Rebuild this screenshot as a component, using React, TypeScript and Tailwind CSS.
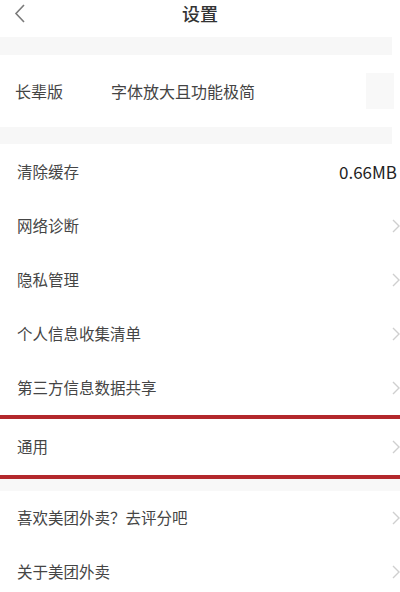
import React from "react";

const font = { fontFamily: '"Noto Sans CJK SC", "Noto Sans", sans-serif' };

function Chevron() {
  return (
    <svg width="8" height="14" viewBox="0 0 8 14" className="ml-auto shrink-0">
      <path d="M1 1 L7 7 L1 13" fill="none" stroke="#cfcfcf" strokeWidth="1.4" />
    </svg>
  );
}

function Row({ label, right }: { label: string; right?: React.ReactNode }) {
  return (
    <div className="flex h-[54px] items-center pl-[17px] bg-white">
      <span className="text-[15.5px] text-[#454545]">{label}</span>
      {right ?? <Chevron />}
    </div>
  );
}

export default function App() {
  return (
    <div className="w-[400px] h-[592px] overflow-hidden bg-white" style={font}>
      <div className="relative flex h-[37px] items-center justify-center">
        <svg width="12" height="20" viewBox="0 0 12 20" className="absolute left-[14px] top-[4px]">
          <path d="M10 1 L2 9.5 L10 18" fill="none" stroke="#7a7a7a" strokeWidth="1.6" />
        </svg>
        <span className="text-[18px] font-medium text-[#333] -mt-[10px]">设置</span>
      </div>
      <div className="h-[18px] mr-[8px] bg-[#f7f7f7]" />
      <div className="flex h-[72px] items-center pl-[15px]">
        <span className="text-[16px] text-[#444]">长辈版</span>
        <span className="ml-[48px] text-[16px] text-[#444]">字体放大且功能极简</span>
        <div className="ml-auto mr-[6px] h-[36px] w-[28px] bg-[#f8f8f8]" />
      </div>
      <div className="h-[17px] mr-[8px] bg-[#f7f7f7]" />
      <div className="h-[1px]" />
      <Row
        label="清除缓存"
        right={<span className="ml-auto pr-[3px] text-[17px] text-[#222]">0.66MB</span>}
      />
      <Row label="网络诊断" />
      <Row label="隐私管理" />
      <Row label="个人信息收集清单" />
      <Row label="第三方信息数据共享" />
      <div className="flex h-[64px] items-center pl-[17px] border-y-4 border-[#b3282c]">
        <span className="text-[15.5px] text-[#454545]">通用</span>
        <Chevron />
      </div>
      <div className="h-[12px] bg-[#f8f8f8]" />
      <Row label="喜欢美团外卖？去评分吧" />
      <Row label="关于美团外卖" />
    </div>
  );
}
